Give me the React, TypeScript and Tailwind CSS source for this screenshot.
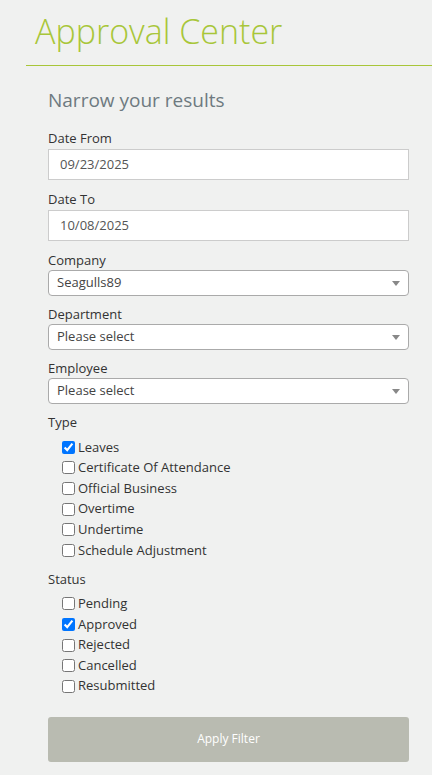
import React from "react";

const types = [
  { label: "Leaves", checked: true },
  { label: "Certificate Of Attendance", checked: false },
  { label: "Official Business", checked: false },
  { label: "Overtime", checked: false },
  { label: "Undertime", checked: false },
  { label: "Schedule Adjustment", checked: false },
];

const statuses = [
  { label: "Pending", checked: false },
  { label: "Approved", checked: true },
  { label: "Rejected", checked: false },
  { label: "Cancelled", checked: false },
  { label: "Resubmitted", checked: false },
];

function DateField({ label, value }: { label: string; value: string }) {
  return (
    <div className="mb-[10px]">
      <div className="text-[13px] leading-[18px] text-[#333] mb-[2px]">{label}</div>
      <div className="h-[31px] bg-white border border-[#ccc] flex items-center pl-[11px] text-[13px] text-[#555]">
        {value}
      </div>
    </div>
  );
}

function SelectField({ label, value }: { label: string; value: string }) {
  return (
    <div className="mb-[9px]">
      <div className="text-[13px] leading-[18px] text-[#333] mb-[1px]">{label}</div>
      <div className="h-[26px] bg-white border border-[#aaa] rounded-[4px] flex items-center justify-between pl-[8px] pr-[8px] text-[13px] text-[#444]">
        <span>{value}</span>
        <span className="w-0 h-0 border-l-[4px] border-r-[4px] border-t-[5px] border-l-transparent border-r-transparent border-t-[#888]" />
      </div>
    </div>
  );
}

function CheckList({ items }: { items: { label: string; checked: boolean }[] }) {
  return (
    <div className="flex flex-col pl-[14px] pt-[6px]">
      {items.map((item) => (
        <label key={item.label} className="flex items-center h-[20.6px] text-[13px] text-[#333]">
          <input
            type="checkbox"
            defaultChecked={item.checked}
            className="w-[13px] h-[13px] m-0 mr-[3px] accent-[#0075ff]"
          />
          {item.label}
        </label>
      ))}
    </div>
  );
}

export default function App() {
  return (
    <div className="min-h-[775px] bg-[#f0f1f0] font-['Open_Sans',sans-serif]">
      <div className="pl-[35px] pt-[9px] pb-[11px]">
        <h1 className="text-[34px] leading-[45px] font-light text-[#a8c639]">Approval Center</h1>
      </div>
      <div className="ml-[26px] h-px bg-[#a8c639]" />
      <div className="px-[48px] pt-[21px] pb-[14px] pr-[23px]">
        <h2 className="text-[19px] leading-[26px] text-[#6e7a80] mb-[16px]">Narrow your results</h2>
        <DateField label="Date From" value="09/23/2025" />
        <DateField label="Date To" value="10/08/2025" />
        <SelectField label="Company" value="Seagulls89" />
        <SelectField label="Department" value="Please select" />
        <SelectField label="Employee" value="Please select" />
        <div className="text-[13px] leading-[18px] text-[#333] mt-[3px]">Type</div>
        <CheckList items={types} />
        <div className="text-[13px] leading-[18px] text-[#333] mt-[9px]">Status</div>
        <CheckList items={statuses} />
        <button className="mt-[20px] w-full h-[45px] rounded-[3px] bg-[#b9bbb1] text-white text-[12px]">
          Apply Filter
        </button>
      </div>
    </div>
  );
}
